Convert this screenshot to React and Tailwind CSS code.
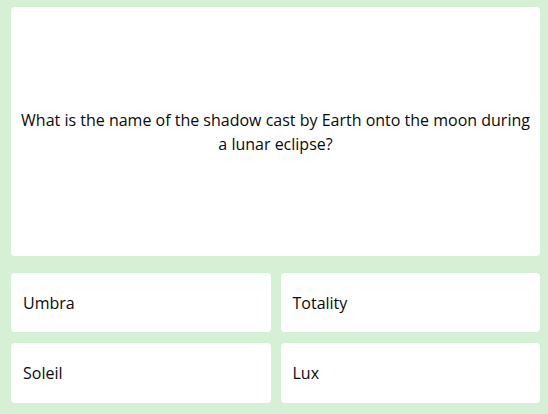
const answers = [
  { label: "Umbra", h: "h-[59px]" },
  { label: "Totality", h: "h-[59px]" },
  { label: "Soleil", h: "h-[60px]" },
  { label: "Lux", h: "h-[60px]" },
];

export default function App() {
  return (
    <div
      className="flex h-[414px] w-full flex-col bg-[#d6f0d6] pt-[7px] pr-[8px] pb-[11px] pl-[11px] text-[#0a0a0a]"
      style={{ fontFamily: '"Open Sans", sans-serif' }}
    >
      {/* Question */}
      <div className="flex flex-1 items-center justify-center rounded-[4px] bg-white px-[10px] text-center text-[16px] leading-[24px]">
        What is the name of the shadow cast by Earth onto the moon during a lunar eclipse?
      </div>

      {/* Answers */}
      <div className="mt-[17px] grid grid-cols-2 gap-x-[10px] gap-y-[11px]">
        {answers.map((a) => (
          <button
            key={a.label}
            className={`flex ${a.h} items-center rounded-[4px] bg-white pl-[12px] text-left text-[16px]`}
          >
            {a.label}
          </button>
        ))}
      </div>
    </div>
  );
}
